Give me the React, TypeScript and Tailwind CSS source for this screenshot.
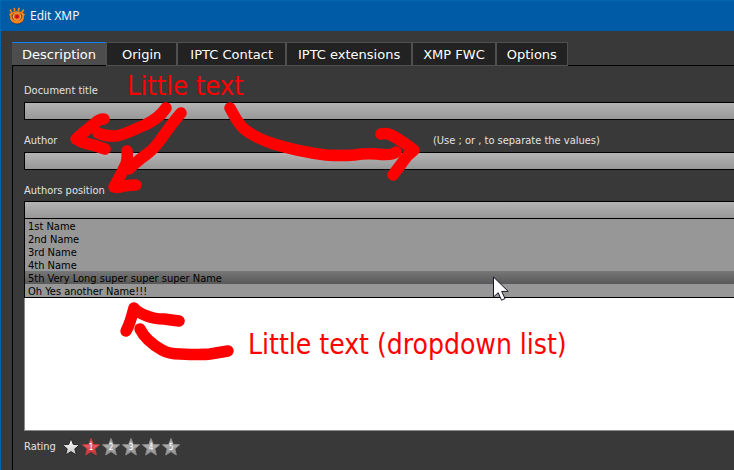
import { useState } from "react";

const tabs = [
  { name: "Description", padding: "px-[9px]" },
  { name: "Origin", padding: "px-[15px]" },
  { name: "IPTC Contact", padding: "px-3" },
  { name: "IPTC extensions", padding: "px-[11px]" },
  { name: "XMP FWC", padding: "px-[10px]" },
  { name: "Options", padding: "px-[10px]" },
];

const positions = [
  "1st Name",
  "2nd Name",
  "3rd Name",
  "4th Name",
  "5th Very Long super super super Name",
  "Oh Yes another Name!!!",
];

const fieldClass =
  "block h-[18px] w-full border border-r-0 border-black bg-linear-to-b from-[#b4b4b4] to-[#989898] px-1 text-[11px] text-black outline-none";

function AppIcon() {
  return (
    <svg viewBox="0 0 18 18" className="h-[18px] w-[18px]" aria-hidden="true">
      <path d="M2 12c1.500 4 4 5.500 7 5.500s5.500-1.500 7-5.500Z" fill="#173f66" />
      <g stroke="#ff8418" strokeWidth="1.700" strokeLinecap="round" fill="none">
        <path d="M3.200 4.800 2.400 3.200M6.600 3.600 6.400 1.600M10.400 3.400 11 1.400M14 5l1.400-1.800" />
      </g>
      <path d="M1 7.800C3 5 6 4.200 9 4.200s6 .8 8 3.600L15.800 9v3c-1 3-3.600 4.400-6.800 4.400S3.200 15 2.200 12V9Z" fill="#ff8418" />
      <path d="M3.500 8.600C5 6.200 7 5.600 9 5.600s4 .6 5.500 3C14 12.400 12 14 9 14s-5-1.600-5.500-5.400Z" fill="#7a4420" />
      <circle cx="9" cy="9.600" r="4.200" fill="#ffa640" />
      <circle cx="9" cy="9.600" r="3" fill="#e8541c" />
      <circle cx="9" cy="9.600" r="1.800" fill="#c40d0d" />
    </svg>
  );
}

function TitleBar() {
  return (
    <header className="flex h-[31px] items-center gap-1 border-t border-[#0068b3] bg-[#005ba6] pl-[7px]">
      <AppIcon />
      <h1 className="font-['Open_Sans',sans-serif] text-[12px] leading-4 text-white">Edit XMP</h1>
    </header>
  );
}

function TabBar({ active, onSelect }: { active: string; onSelect: (tab: string) => void }) {
  return (
    <div role="tablist" className="flex border-b border-black">
      {tabs.map(({ name, padding }) => (
        <button
          key={name}
          type="button"
          role="tab"
          aria-selected={name === active}
          onClick={() => onSelect(name)}
          className={`${padding} pt-0.5 text-[13px] leading-5 whitespace-nowrap text-white ${
            name === active
              ? "h-[23px] border border-b-0 border-x-[#4d4d4d] border-t-[#0a84ff] bg-[#4d4d4d]"
              : "-mb-px h-6 border border-[#505050] bg-[#222222]"
          }`}
        >
          {name}
        </button>
      ))}
    </div>
  );
}

function PositionField() {
  const [value, setValue] = useState("");
  const [highlighted, setHighlighted] = useState(4);

  return (
    <div className="relative mt-px">
      <input
        id="position"
        type="text"
        role="combobox"
        aria-expanded="true"
        aria-controls="position-list"
        value={value}
        onChange={(event) => setValue(event.target.value)}
        className={fieldClass}
      />
      <ul
        id="position-list"
        role="listbox"
        className="absolute inset-x-0 top-full z-10 border-b border-l border-black bg-[#979797]"
      >
        {positions.map((position, index) => (
          <li
            key={position}
            role="option"
            aria-selected={index === highlighted}
            onMouseEnter={() => setHighlighted(index)}
            onClick={() => setValue(position)}
            className={`h-[13px] cursor-default px-[3px] text-[11px] leading-4 text-black ${
              index === highlighted ? "bg-linear-to-b from-[#777777] to-[#595959]" : ""
            }`}
          >
            {position}
          </li>
        ))}
      </ul>
    </div>
  );
}

function Star({ value }: { value: number }) {
  const fill = value === 0 ? "url(#star-clear)" : value === 1 ? "url(#star-red)" : "url(#star-gray)";
  return (
    <svg viewBox="0 0 20 20" className="h-5 w-5" aria-hidden="true">
      <path
        d="M10 1.500 12.300 7.400 18.600 7.800 13.800 11.800 15.300 18 10 14.600 4.700 18 6.200 11.800 1.400 7.800 7.700 7.400Z"
        fill={fill}
        stroke={value === 0 ? "#2a2a2a" : value === 1 ? "#c83a3a" : "#8c8c8c"}
        strokeWidth="1"
      />
      {value > 0 && (
        <text x="10" y="13" textAnchor="middle" fontSize="8" fill="#ffffff">
          {value}
        </text>
      )}
    </svg>
  );
}

function Rating() {
  const [rating, setRating] = useState(1);

  return (
    <fieldset className="flex h-5 items-center">
      <legend className="float-left w-[37px] text-[11px] leading-[22px]">Rating</legend>
      <svg className="absolute h-0 w-0" aria-hidden="true">
        <defs>
          <linearGradient id="star-clear" x1="0" y1="0" x2="0" y2="1">
            <stop offset="0" stopColor="#ffffff" />
            <stop offset="1" stopColor="#c8c8c8" />
          </linearGradient>
          <linearGradient id="star-red" x1="0" y1="0" x2="0" y2="1">
            <stop offset="0" stopColor="#f08080" />
            <stop offset="1" stopColor="#cf2e2e" />
          </linearGradient>
          <linearGradient id="star-gray" x1="0" y1="0" x2="0" y2="1">
            <stop offset="0" stopColor="#bdbdbd" />
            <stop offset="1" stopColor="#929292" />
          </linearGradient>
        </defs>
      </svg>
      {[0, 1, 2, 3, 4, 5].map((value) => (
        <label key={value} className="relative block h-5 w-5">
          <input
            type="radio"
            name="rating"
            aria-label={`Rating ${value}`}
            checked={rating === value}
            onChange={() => setRating(value)}
            className="absolute inset-0 appearance-none"
          />
          <Star value={value} />
        </label>
      ))}
    </fieldset>
  );
}

// Hand-drawn red notes on top of the dialog
function Annotations() {
  return (
    <div className="pointer-events-none absolute inset-y-0 right-0 -left-px z-20 overflow-hidden leading-8 text-[#ff0000]">
      <svg width="734" height="470" viewBox="0 0 734 470" className="absolute top-0 left-0" aria-hidden="true">
        <g fill="none" stroke="#ff0000" strokeWidth="11.500" strokeLinecap="round" strokeLinejoin="round">
          <path d="M166 108C160 117 153 121 145 125C130 131 122 136 114 136Q104 136 98 133" />
          <path d="M104 119Q99 119 95 123Q84 132 76 139Q80 142 85 143Q94 145 105 149" />
          <path d="M181 113C173 122 166 132 161 139Q154 149 147 154Q136 162 129 169" />
          <path d="M127 151Q128 158 126 164Q121 175 114 187Q118 188 124 186Q130 185 136 185" />
          <path d="M230 108C234 115 237 122 243 128C251 135 262 140 274 144Q300 152 326 155Q342 156 354 155Q366 153 377 154Q392 156 396 152" />
          <path d="M381 134Q387 132 395 137Q406 144 414 150Q407 155 402 163L393 175" />
          <path d="M126 331Q130 324 134 308Q138 313 147 316Q154 319 164 319L179 321" />
          <path d="M140 329Q146 341 162 350Q169 354 180 354Q202 355 210 354L228 351" />
        </g>
      </svg>
      <p className="absolute top-[70px] left-[127px] text-[27px] whitespace-nowrap">Little text</p>
      <p className="absolute top-[329px] left-[248px] text-[28px] whitespace-nowrap">Little text (dropdown list)</p>
    </div>
  );
}

function Cursor() {
  return (
    <svg viewBox="0 0 17 26" className="pointer-events-none absolute top-[276px] left-[492px] z-30 h-[26px] w-[17px]" aria-hidden="true">
      <path d="M.5 1v20l4.700-4.300 3.300 7.500 3.500-1.600-3.300-7.200h6.500Z" fill="#ffffff" stroke="#151525" strokeWidth="1" />
    </svg>
  );
}

export default function App() {
  const [active, setActive] = useState("Description");

  return (
    <div className="relative flex min-h-screen flex-col overflow-hidden border-l border-[#0068b3] bg-[#393939] font-['DejaVu_Sans_Condensed','DejaVu_Sans',sans-serif] text-[#e2e2e2]">
      <TitleBar />
      <main className="flex grow flex-col pt-[11px] pl-[11px]">
        <div className="font-['DejaVu_Sans',sans-serif]">
          <TabBar active={active} onSelect={setActive} />
        </div>
        <form className="flex grow flex-col border-l border-black pt-4 pl-[11px] text-[11px] leading-[18px]">
          <label htmlFor="title">Document title</label>
          <input id="title" type="text" className={`${fieldClass} mt-0.5`} />
          <div className="mt-3 grid grid-cols-[409px_1fr]">
            <label htmlFor="author">Author</label>
            <span id="author-hint">(Use ; or , to separate the values)</span>
          </div>
          <input id="author" type="text" aria-describedby="author-hint" className={`${fieldClass} mt-0.5`} />
          <label htmlFor="position" className="mt-3">Authors position</label>
          <PositionField />
          <textarea
            aria-label="Description"
            className="block min-h-[212px] w-full resize-none border-b border-l border-[#8a8a8a] bg-white p-1 text-black outline-none"
          />
          <div className="mt-[6px]">
            <Rating />
          </div>
        </form>
      </main>
      <Annotations />
      <Cursor />
    </div>
  );
}
